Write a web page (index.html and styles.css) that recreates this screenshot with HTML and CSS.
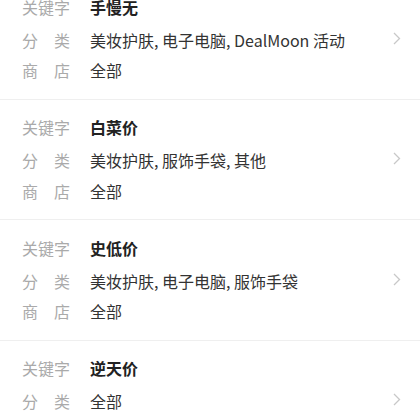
FILE: index.html
```html
<!DOCTYPE html>
<html lang="zh-CN">
<head>
  <meta charset="UTF-8">
  <meta name="viewport" content="width=device-width, initial-scale=1.0">
  <title>订阅提醒</title>
  <link rel="stylesheet" href="styles.css">
</head>
<body>
  <div class="list">
    <div class="item">
      <div class="info">
        <div class="row row-key"><span class="label">关键字</span><span class="keyword">手慢无</span></div>
        <div class="row"><span class="label">分类</span><span class="value">美妆护肤, 电子电脑, DealMoon 活动</span></div>
        <div class="row"><span class="label">商店</span><span class="value">全部</span></div>
      </div>
      <svg class="arrow" width="8" height="13" viewBox="0 0 8 13"><path d="M1 1 L6.5 6.5 L1 12" fill="none" stroke="#c8c8c8" stroke-width="1.3"/></svg>
    </div>

    <div class="item">
      <div class="info">
        <div class="row row-key"><span class="label">关键字</span><span class="keyword">白菜价</span></div>
        <div class="row"><span class="label">分类</span><span class="value">美妆护肤, 服饰手袋, 其他</span></div>
        <div class="row"><span class="label">商店</span><span class="value">全部</span></div>
      </div>
      <svg class="arrow" width="8" height="13" viewBox="0 0 8 13"><path d="M1 1 L6.5 6.5 L1 12" fill="none" stroke="#c8c8c8" stroke-width="1.3"/></svg>
    </div>

    <div class="item">
      <div class="info">
        <div class="row row-key"><span class="label">关键字</span><span class="keyword">史低价</span></div>
        <div class="row"><span class="label">分类</span><span class="value">美妆护肤, 电子电脑, 服饰手袋</span></div>
        <div class="row"><span class="label">商店</span><span class="value">全部</span></div>
      </div>
      <svg class="arrow" width="8" height="13" viewBox="0 0 8 13"><path d="M1 1 L6.5 6.5 L1 12" fill="none" stroke="#c8c8c8" stroke-width="1.3"/></svg>
    </div>

    <div class="item">
      <div class="info">
        <div class="row row-key"><span class="label">关键字</span><span class="keyword">逆天价</span></div>
        <div class="row"><span class="label">分类</span><span class="value">全部</span></div>
        <div class="row"><span class="label">商店</span><span class="value">全部</span></div>
      </div>
      <svg class="arrow" width="8" height="13" viewBox="0 0 8 13"><path d="M1 1 L6.5 6.5 L1 12" fill="none" stroke="#c8c8c8" stroke-width="1.3"/></svg>
    </div>
  </div>
</body>
</html>
```

FILE: styles.css
```css
body {
  margin: 0;
  background-color: #fff;
  font-family: "Noto Sans CJK SC", "Noto Sans", sans-serif;
  overflow: hidden;
}

.list {
  margin-top: -21px;
}

.item {
  display: flex;
  align-items: center;
  padding: 15px 19px 16px 22px;
  border-bottom: 1px solid #efefef;
}

.info {
  flex: 1;
}

.row {
  display: flex;
  align-items: center;
  height: 25px;
  margin-bottom: 5.5px;
  font-size: 16px;
}

.row:last-child {
  margin-bottom: 0;
}

.row-key {
  margin-bottom: 8px;
}

.label {
  width: 48px;
  margin-right: 20px;
  color: #aaa;
  text-align: justify;
  text-align-last: justify;
}

.value {
  color: #333;
}

.keyword {
  color: #222;
  font-weight: bold;
}

.arrow {
  display: block;
}
```
